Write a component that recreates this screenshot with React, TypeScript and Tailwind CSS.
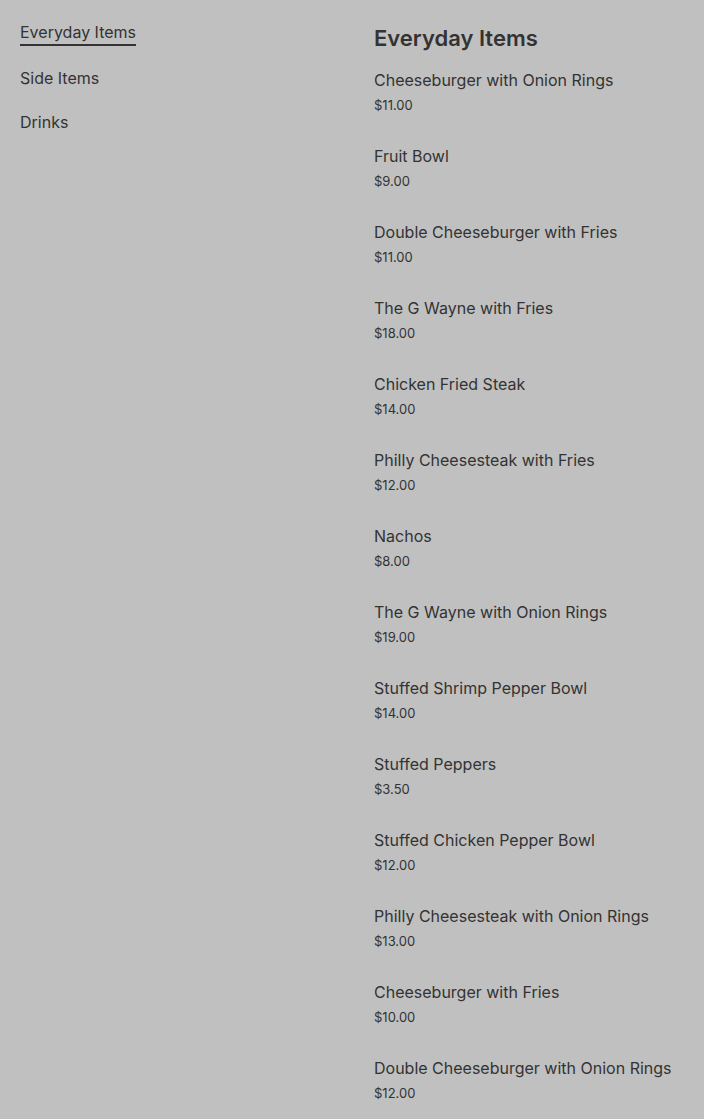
import React from 'react';

const items = [
    {name: 'Cheeseburger with Onion Rings', price: '$11.00'},
    {name: 'Fruit Bowl', price: '$9.00'},
    {name: 'Double Cheeseburger with Fries', price: '$11.00'},
    {name: 'The G Wayne with Fries', price: '$18.00'},
    {name: 'Chicken Fried Steak', price: '$14.00'},
    {name: 'Philly Cheesesteak with Fries', price: '$12.00'},
    {name: 'Nachos', price: '$8.00'},
    {name: 'The G Wayne with Onion Rings', price: '$19.00'},
    {name: 'Stuffed Shrimp Pepper Bowl', price: '$14.00'},
    {name: 'Stuffed Peppers', price: '$3.50'},
    {name: 'Stuffed Chicken Pepper Bowl', price: '$12.00'},
    {name: 'Philly Cheesesteak with Onion Rings', price: '$13.00'},
    {name: 'Cheeseburger with Fries', price: '$10.00'},
    {name: 'Double Cheeseburger with Onion Rings', price: '$12.00'},
];

const categories = ['Everyday Items', 'Side Items', 'Drinks'];

const App: React.FC = () => {
    return (
        <div className="min-h-screen bg-[#c0c0c0] text-[#333333] flex" style={{fontFamily: 'Inter, "Noto Sans", sans-serif'}}>
            <div className="w-[374px] shrink-0 px-5 pt-[20px] flex flex-col gap-[20px]">
                {categories.map((c, i) => (
                    <div key={c} className="flex">
                        <span className={'text-base leading-6 ' + (i === 0 ? 'border-b-2 border-[#333333]' : '')}>{c}</span>
                    </div>
                ))}
            </div>
            <div className="flex-1 pt-6 pr-5">
                <h1 className="text-[22px] leading-7 font-semibold mb-4">Everyday Items</h1>
                <div className="flex flex-col gap-[29px]">
                    {items.map(item => (
                        <div key={item.name} className="flex flex-col gap-[3px]">
                            <div className="text-base leading-6">{item.name}</div>
                            <div className="text-[13px] leading-5">{item.price}</div>
                        </div>
                    ))}
                </div>
            </div>
        </div>
    );
};

export default App;
